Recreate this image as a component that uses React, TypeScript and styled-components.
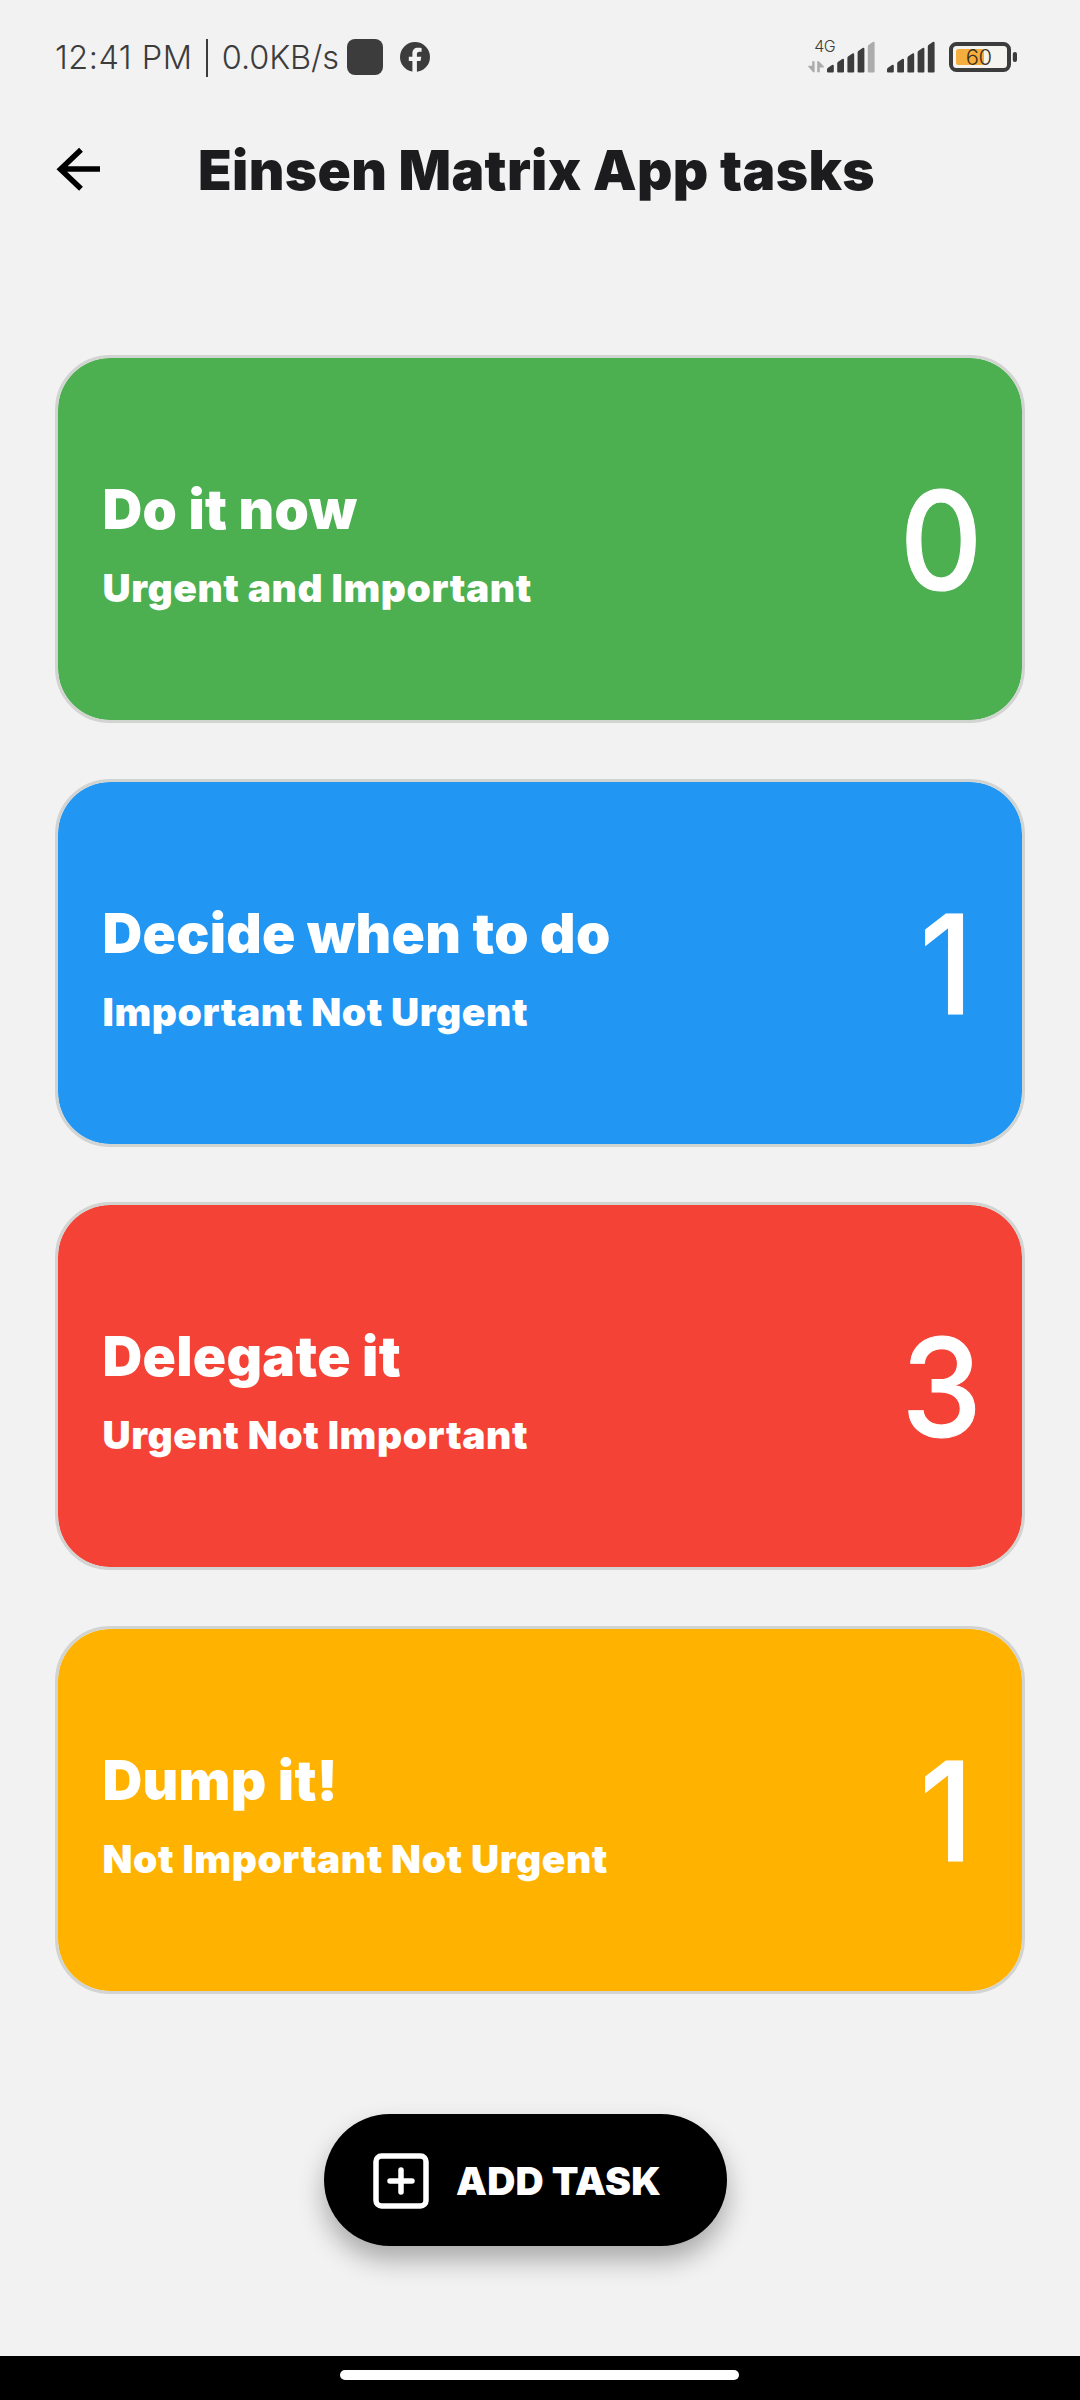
import React from "react";
import styled, { createGlobalStyle } from "styled-components";

const GlobalStyle = createGlobalStyle`
  * { box-sizing: border-box; }
  body { margin: 0; background: #f2f2f2; }
`;

const Screen = styled.div`
  width: 1080px;
  height: 2400px;
  display: flex;
  flex-direction: column;
  background: #f2f2f2;
  font-family: Inter, Roboto, sans-serif;
  overflow: hidden;
  white-space: nowrap;
`;

const StatusBar = styled.header`
  height: 114px;
  flex: none;
  display: flex;
  align-items: center;
  padding: 0 62px 0 55px;
  color: #3c3c3c;
`;

const Clock = styled.div`
  width: 284px;
  padding-top: 2px;
  display: flex;
  align-items: center;
  font-size: 32.5px;
  line-height: 40px;
  font-weight: 300;
`;

const Time = styled.span`
  width: 151px;
  letter-spacing: 0.5px;
`;

const Divider = styled.i`
  flex: none;
  width: 2px;
  height: 38px;
  margin-right: 14px;
  background: #3c3c3c;
`;

const Speed = styled.span`
  letter-spacing: -0.1px;
`;

const AppDot = styled.span`
  width: 36px;
  height: 36px;
  margin: 0 17px 0 8px;
  border-radius: 8px;
  background: #3c3c3c;
`;

const StatusIcons = styled.svg`
  margin-left: auto;
  display: block;
`;

const AppBar = styled.div`
  height: 112px;
  flex: none;
  display: flex;
  align-items: center;
  padding-left: 55px;
`;

const Title = styled.h1`
  margin: 0 0 0 95px;
  font-size: 55px;
  line-height: 68px;
  font-weight: 900;
  letter-spacing: 0.35px;
  color: #1c1c1e;
`;

const List = styled.main`
  display: flex;
  flex-direction: column;
  gap: 55.5px;
  padding: 129px 55px 0;
`;

const Card = styled.section<{ $color: string }>`
  height: 368px;
  display: flex;
  align-items: center;
  justify-content: space-between;
  padding: 0 40px 0 44.5px;
  border: 3px solid #d2d4d2;
  border-radius: 55px;
  background: ${(p) => p.$color};
  background-clip: padding-box;
  color: #fff;
`;

const CardText = styled.div`
  display: flex;
  flex-direction: column;
  gap: 12px;
  padding-top: 18px;
`;

const CardTitle = styled.h2`
  margin: 0;
  font-size: 55px;
  line-height: 68px;
  font-weight: 900;
  letter-spacing: 0.3px;
`;

const CardSubtitle = styled.p`
  margin: 0;
  font-size: 39px;
  line-height: 66px;
  font-weight: 900;
  letter-spacing: 0.55px;
`;

const Count = styled.span<{ $inset: number }>`
  padding-top: 2px;
  margin-right: ${(p) => p.$inset}px;
  font-size: 137px;
  line-height: 166px;
  font-weight: 500;
  -webkit-text-stroke: 1px #fff;
  transform: scaleX(0.935);
  transform-origin: right;
`;

const Footer = styled.div`
  flex: 1;
  display: flex;
  align-items: flex-start;
  padding: 120.5px 0 0 324px;
`;

const AddButton = styled.button`
  width: 403px;
  height: 132px;
  display: flex;
  align-items: center;
  gap: 27px;
  padding: 2px 0 0 49px;
  border: 0;
  border-radius: 66px;
  background: #000;
  color: #fff;
  font: 900 39px/48px Inter, Roboto, sans-serif;
  letter-spacing: 0.15px;
  box-shadow: 0 14px 26px rgba(0, 0, 0, 0.3);
`;

const NavBar = styled.nav`
  height: 44px;
  flex: none;
  display: flex;
  align-items: flex-start;
  padding: 14px 0 0 340px;
  background: #000;
`;

const Handle = styled.span`
  width: 399px;
  height: 10px;
  border-radius: 5px;
  background: #fff;
`;

const tasks = [
  { title: "Do it now", subtitle: "Urgent and Important", count: 0, color: "#4caf50" },
  { title: "Decide when to do", subtitle: "Important Not Urgent", count: 1, color: "#2196f3" },
  { title: "Delegate it", subtitle: "Urgent Not Important", count: 3, color: "#f44336" },
  { title: "Dump it!", subtitle: "Not Important Not Urgent", count: 1, color: "#ffb300" },
];

const SignalBars = ({ x, dimLast }: { x: number; dimLast?: boolean }) => (
  <>
    {[8, 14, 19.5, 25, 31].map((h, i) => {
      const left = x + i * 10.2;
      const top = 33.5 - h;
      return (
        <path
          key={h}
          d={`M${left} 32.5V${top + 5}q0-1 1-1.7l4-2.8q1.8-1 1.8 1V32.5q0 1-1 1h-4.8q-1 0-1-1z`}
          fill={dimLast && i === 4 ? "#acacac" : "#3c3c3c"}
        />
      );
    })}
  </>
);

export default function App() {
  return (
    <Screen>
      <GlobalStyle />
      <StatusBar>
        <Clock>
          <Time>12:41 PM</Time>
          <Divider />
          <Speed>0.0KB/s</Speed>
        </Clock>
        <AppDot />
        <svg width="30" height="30" viewBox="0 0 30 30">
          <circle cx="15" cy="15" r="15" fill="#3c3c3c" />
          <path
            d="M12.4 30V19H8.8v-4.3h3.6v-3.2c0-3.8 2.1-5.8 5.5-5.8 1.4 0 2.7.2 3.7.4v3.6h-2.1c-1.9 0-2.6 1-2.6 2.3v2.7h4.4l-.8 4.3h-3.6v11z"
            fill="#f2f2f2"
          />
        </svg>
        <StatusIcons width="210" height="52" viewBox="0 -8 210 52">
          <text x="6.2" y="13" fontSize="16" fontWeight="300" letterSpacing="-.6" fill="#3c3c3c">4G</text>
          <path d="M4.2 22.3h2.4v11H5.2L.3 27.8v-1h3.9zM9.2 33.3v-11h1.6l5 5v1.2h-4v4.8z" fill="#acacac" />
          <SignalBars x={19} dimLast />
          <SignalBars x={79} />
          <rect x="143" y="5" width="58" height="26" rx="5.5" fill="#f6f4ee" stroke="#3c3c3c" strokeWidth="4" />
          <rect x="148" y="10" width="28" height="16" rx="2.5" fill="#f5ae3d" />
          <rect x="204.8" y="13" width="4.2" height="10" rx="2" fill="#3c3c3c" />
          <text x="157.8" y="26" fontSize="22" fontWeight="300" letterSpacing="-.5" fill="#3c3220">60</text>
        </StatusIcons>
      </StatusBar>
      <AppBar>
        <svg width="48" height="48" viewBox="0 0 48 48">
          <path d="M45 23H5M26 3.7L5.5 23.2 26 42.7" fill="none" stroke="#000" strokeWidth="5.5" />
        </svg>
        <Title>Einsen Matrix App tasks</Title>
      </AppBar>
      <List>
        {tasks.map((t) => (
          <Card key={t.title} $color={t.color}>
            <CardText>
              <CardTitle>{t.title}</CardTitle>
              <CardSubtitle>{t.subtitle}</CardSubtitle>
            </CardText>
            <Count $inset={t.count === 1 ? 9.5 : 0}>{t.count}</Count>
          </Card>
        ))}
      </List>
      <Footer>
        <AddButton>
          <svg width="56" height="56" viewBox="0 0 56 56" fill="none" stroke="#fff" strokeWidth="5.5">
            <rect x="3" y="3" width="50" height="50" rx="5.5" />
            <path d="M28 17v22M17 28h22" strokeLinecap="round" />
          </svg>
          ADD TASK
        </AddButton>
      </Footer>
      <NavBar>
        <Handle />
      </NavBar>
    </Screen>
  );
}
